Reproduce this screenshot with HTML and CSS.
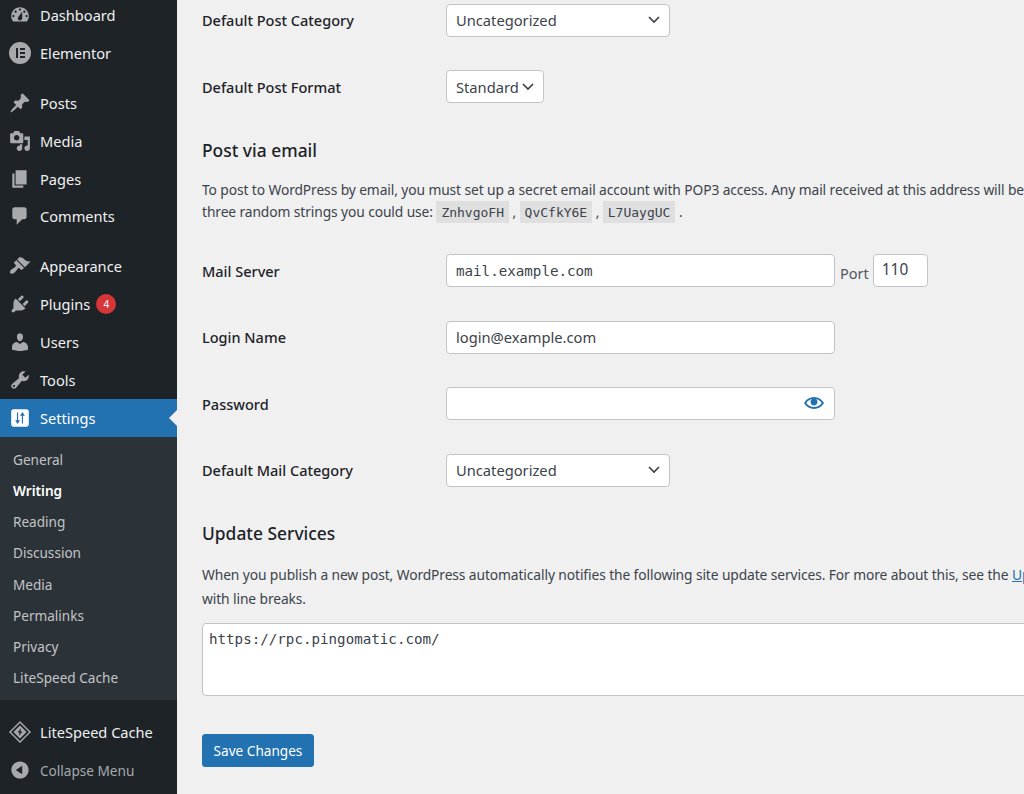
FILE: index.html
```html
<!DOCTYPE html>
<html lang="en">
<head>
    <meta charset="UTF-8">
    <meta name="viewport" content="width=device-width, initial-scale=1.0">
    <title>Writing Settings</title>
    <link rel="stylesheet" href="styles.css">
</head>
<body>
    <div class="admin">
        <nav class="sidebar">
            <ul class="menu">
                <li class="menu-item">
                    <svg class="icon" viewBox="0 0 20 20"><path fill-rule="evenodd" d="M3.76 16h12.48c1.1-1.37 1.76-3.11 1.76-5 0-4.42-3.58-8-8-8s-8 3.58-8 8c0 1.89.66 3.63 1.76 5zM10 4c.55 0 1 .45 1 1s-.45 1-1 1-1-.45-1-1 .45-1 1-1zM6 6c.55 0 1 .45 1 1s-.45 1-1 1-1-.45-1-1 .45-1 1-1zm8 0c.55 0 1 .45 1 1s-.45 1-1 1-1-.45-1-1 .45-1 1-1zm-5.37 5.55L12 7v6c0 1.1-.9 2-2 2s-2-.9-2-2c0-.57.24-1.08.63-1.45zM4 10c.55 0 1 .45 1 1s-.45 1-1 1-1-.45-1-1 .45-1 1-1zm12 0c.55 0 1 .45 1 1s-.45 1-1 1-1-.45-1-1 .45-1 1-1z"/></svg>
                    Dashboard
                </li>
                <li class="menu-item">
                    <svg class="icon" viewBox="0 0 22 22"><path fill-rule="evenodd" d="M11 0a11 11 0 1 0 0 22 11 11 0 0 0 0-22zM7 6h2v10H7zm4 0h5v2h-5zm0 4h5v2h-5zm0 4h5v2h-5z"/></svg>
                    Elementor
                </li>
                <li class="menu-item separated">
                    <svg class="icon" viewBox="0 0 20 20"><path d="M10.44 3.02l1.82-1.82 6.36 6.35-1.83 1.82c-1.05-.68-2.48-.57-3.41.36l-.75.75c-.92.93-1.04 2.35-.35 3.41l-1.83 1.82-2.41-2.41-2.8 2.79c-.42.42-3.38 2.71-3.8 2.29s1.86-3.39 2.28-3.81l2.79-2.79L4.1 9.36l1.83-1.82c1.05.69 2.48.57 3.4-.36l.75-.75c.93-.92 1.05-2.35.36-3.41z"/></svg>
                    Posts
                </li>
                <li class="menu-item">
                    <svg class="icon" viewBox="0 0 20 20"><path fill-rule="evenodd" d="M13 11V4c0-.55-.45-1-1-1h-1.67L9 1H5L3.67 3H2c-.55 0-1 .45-1 1v7c0 .55.45 1 1 1h10c.55 0 1-.45 1-1zM7 4.5c1.38 0 2.5 1.12 2.5 2.5S8.38 9.5 7 9.5 4.5 8.38 4.5 7 5.62 4.5 7 4.5zM14 6h5v10.5c0 1.38-1.12 2.5-2.5 2.5S14 17.88 14 16.5s1.12-2.5 2.5-2.5c.17 0 .34.02.5.05V9h-3V6zm-4 8.05V13h2v3.5c0 1.38-1.12 2.5-2.5 2.5S7 17.88 7 16.5 8.12 14 9.5 14c.17 0 .34.02.5.05z"/></svg>
                    Media
                </li>
                <li class="menu-item">
                    <svg class="icon" viewBox="0 0 20 20"><path d="M6 15V2h10v13H6zm-1 1h8v2H3V5h2v11z"/></svg>
                    Pages
                </li>
                <li class="menu-item">
                    <svg class="icon" viewBox="0 0 20 20"><path d="M5 2h9c1.1 0 2 .9 2 2v7c0 1.1-.9 2-2 2h-2l-5 5v-5H5c-1.1 0-2-.9-2-2V4c0-1.1.9-2 2-2z"/></svg>
                    Comments
                </li>
                <li class="menu-item separated">
                    <svg class="icon" viewBox="0 0 20 20"><path d="M14.48 11.06L7.41 3.99l1.5-1.5c.5-.56 2.3-.47 3.51.32 1.21.8 1.43 1.28 2.91 2.1 1.18.64 2.45 1.26 4.45.85zm-.71.71L6.7 4.7 4.93 6.47c-.39.39-.39 1.02 0 1.41l1.06 1.06c.39.39.39 1.03 0 1.42-.6.6-1.43 1.11-2.21 1.69-.35.26-.7.53-1.01.84C1.43 13.23.4 14.98 1.1 16.4s3.17.37 4.52-.99c.3-.3.58-.65.84-1 .58-.79 1.09-1.62 1.69-2.22.39-.39 1.02-.39 1.41 0l1.06 1.06c.39.39 1.02.39 1.41 0z"/></svg>
                    Appearance
                </li>
                <li class="menu-item">
                    <svg class="icon" viewBox="0 0 20 20"><path d="M13.11 4.36L9.87 7.6 8 5.73l3.24-3.24c.35-.34 1.05-.2 1.56.32.52.51.66 1.21.31 1.55zm-8 1.77l.91-1.12 9.01 9.01-1.19.84c-.71.71-2.63 1.16-3.82 1.16H6.14L4.9 17.26c-.59.59-1.54.59-2.12 0-.59-.58-.59-1.53 0-2.12l1.24-1.24v-3.88c0-1.13.4-3.19 1.09-3.89zm7.26 3.97l3.24-3.24c.34-.35 1.04-.21 1.55.31.52.51.66 1.21.31 1.55l-3.24 3.25z"/></svg>
                    Plugins
                    <span class="badge">4</span>
                </li>
                <li class="menu-item">
                    <svg class="icon" viewBox="0 0 20 20"><path d="M10 9.25c-2.27 0-2.73-3.44-2.73-3.44C7 4.02 7.82 2 9.97 2c2.16 0 2.98 2.02 2.71 3.81 0 0-.41 3.44-2.68 3.44zm0 2.57L12.72 10c2.39 0 4.52 2.33 4.52 4.53v2.49s-3.65 1.13-7.24 1.13c-3.65 0-7.24-1.13-7.24-1.13v-2.49c0-2.25 1.94-4.48 4.47-4.48z"/></svg>
                    Users
                </li>
                <li class="menu-item">
                    <svg class="icon" viewBox="0 0 20 20"><path fill-rule="evenodd" d="M16.68 9.77c-1.34 1.34-3.3 1.67-4.95.99l-5.41 6.52c-.99.99-2.59.99-3.58 0s-.99-2.59 0-3.57l6.52-5.42c-.68-1.65-.35-3.61.99-4.95 1.28-1.28 3.12-1.62 4.72-1.06l-2.89 2.89 2.82 2.82 2.86-2.87c.53 1.58.18 3.39-1.08 4.65zM3.81 16.21c.4.39 1.04.39 1.43 0 .4-.4.4-1.04 0-1.43-.39-.4-1.03-.4-1.43 0-.39.39-.39 1.03 0 1.43z"/></svg>
                    Tools
                </li>
                <li class="menu-item active">
                    <svg class="icon" viewBox="0 0 20 20"><path fill-rule="evenodd" d="M18 16V4c0-1.100-.9-2-2-2H4c-1.100 0-2 .9-2 2v12c0 1.100.9 2 2 2h12c1.100 0 2-.9 2-2zM7.300 5h1v7h1.700L7.800 15.500 5.600 12h1.700zM12.700 8h1.700l-2.200-3.500L10 8h1.700v7h1z"/></svg>
                    Settings
                </li>
            </ul>
            <ul class="submenu">
                <li>General</li>
                <li class="current">Writing</li>
                <li>Reading</li>
                <li>Discussion</li>
                <li>Media</li>
                <li>Permalinks</li>
                <li>Privacy</li>
                <li>LiteSpeed Cache</li>
            </ul>
            <ul class="menu menu-bottom">
                <li class="menu-item">
                    <svg class="icon" viewBox="0 0 22 22"><path fill-rule="evenodd" d="M11 0l11 11-11 11L0 11zm0 2L2 11l9 9 9-9zM11 4.500l6.500 6.500-6.500 6.500L4.500 11zm1 2.500L8.500 11.500H10.500l-.5 3.500 3.500-4.500H11.500z"/></svg>
                    LiteSpeed Cache
                </li>
                <li class="menu-item collapse">
                    <svg class="icon" viewBox="0 0 20 20"><path d="M10 2.160c4.330 0 7.840 3.510 7.840 7.840s-3.510 7.840-7.840 7.840S2.160 14.330 2.160 10 5.710 2.160 10 2.160zm2 11.720V6.120L6.180 9.970z"/></svg>
                    Collapse Menu
                </li>
            </ul>
        </nav>

        <main class="content">
            <form>
                <div class="form-table">
                    <label for="post-category">Default Post Category</label>
                    <select id="post-category" class="select-wide"><option>Uncategorized</option></select>
                    <label for="post-format">Default Post Format</label>
                    <select id="post-format" class="select-small"><option>Standard</option></select>
                </div>

                <h2>Post via email</h2>
                <p class="desc first-desc">To post to WordPress by email, you must set up a secret email account with POP3 access. Any mail received at this address will be</p>
                <p class="desc">three random strings you could use: <code>ZnhvgoFH</code> , <code>QvCfkY6E</code> , <code>L7UaygUC</code> .</p>

                <div class="form-table mail-table">
                    <label for="mail-server">Mail Server</label>
                    <div class="field-line">
                        <input id="mail-server" class="text-wide mono" type="text" value="mail.example.com">
                        <label class="port-label" for="mail-port">Port</label>
                        <input id="mail-port" class="text-port" type="text" value="110">
                    </div>
                    <label for="login-name">Login Name</label>
                    <input id="login-name" class="text-wide" type="text" value="login@example.com">
                    <label for="mail-pass">Password</label>
                    <div class="password-wrap">
                        <input id="mail-pass" class="text-wide" type="text">
                        <svg class="eye" viewBox="0 0 20 20"><path fill-rule="evenodd" d="M19.700 9.400C17.700 6 14 3.900 10 3.900S2.300 6 .3 9.400L0 10l.3.600c2 3.400 5.700 5.500 9.700 5.500s7.700-2.100 9.700-5.500l.3-.6-.3-.6zM10 14.100c-3.100 0-6-1.600-7.700-4.100C3.600 8 5.700 6.600 8 6.100c-.9.600-1.500 1.700-1.500 2.900 0 1.900 1.600 3.500 3.500 3.500s3.500-1.600 3.500-3.500c0-1.200-.6-2.300-1.500-2.900 2.300.5 4.400 1.900 5.700 3.900-1.700 2.500-4.600 4.100-7.700 4.100z"/></svg>
                    </div>
                    <label for="mail-category">Default Mail Category</label>
                    <select id="mail-category" class="select-wide"><option>Uncategorized</option></select>
                </div>

                <h2 class="services-title">Update Services</h2>
                <p class="desc services-desc">When you publish a new post, WordPress automatically notifies the following site update services. For more about this, see the <a href="#">Update Services</a></p>
                <p class="desc">with line breaks.</p>
                <textarea class="ping-sites" spellcheck="false">https://rpc.pingomatic.com/</textarea>

                <button class="save" type="button">Save Changes</button>
            </form>
        </main>
    </div>
</body>
</html>
```

FILE: styles.css
```css
html, body {
    margin: 0;
    height: 100%;
    overflow: hidden;
}
body {
    font-family: "Noto Sans", Arial, sans-serif;
    font-size: 14.5px;
    color: #3c434a;
    background-color: #f0f0f1;
}
ul {
    list-style: none;
    margin: 0;
    padding: 0;
}
.admin {
    display: grid;
    grid-template-columns: 177px 1fr;
    height: 794px;
}

/* sidebar */
.sidebar {
    background-color: #1d2327;
    color: #f0f0f1;
    font-size: 14.6px;
    overflow: hidden;
}
.menu {
    margin-top: -4px;
}
.menu-bottom {
    margin-top: 13px;
}
.menu-item {
    display: flex;
    align-items: center;
    height: 37.9px;
    padding-left: 9px;
    gap: 9px;
}
.menu-item.separated {
    margin-top: 12px;
}
.icon {
    width: 22px;
    height: 22px;
    fill: #a7aaad;
    flex-shrink: 0;
}
.badge {
    display: inline-flex;
    align-items: center;
    justify-content: center;
    width: 20px;
    height: 20px;
    margin-left: -3px;
    border-radius: 50%;
    background-color: #d63638;
    color: white;
    font-size: 10px;
}
.menu-item.active {
    position: relative;
    background-color: #2271b1;
    color: white;
}
.active .icon {
    fill: white;
}
.active::after {
    content: "";
    position: absolute;
    right: 0;
    top: 50%;
    margin-top: -8px;
    border: 8px solid transparent;
    border-right-color: #f0f0f1;
}
.collapse {
    color: #a7aaad;
    font-size: 13.6px;
}
.submenu {
    background-color: #2c3338;
    padding: 7px 0 7px;
    color: #c3c4c7;
    font-size: 13.6px;
}
.submenu li {
    height: 31.2px;
    line-height: 31.2px;
    padding-left: 13px;
}
.submenu .current {
    color: white;
    font-weight: 600;
}

/* content */
.content {
    padding-left: 25px;
    overflow: hidden;
}
.form-table {
    display: grid;
    grid-template-columns: 244px auto;
    justify-content: start;
    align-items: center;
    row-gap: 33.6px;
    padding-top: 3.5px;
}
.form-table > label {
    color: #1d2327;
    font-weight: 500;
}
select, input, textarea {
    box-sizing: border-box;
    height: 33px;
    border: 1px solid #c3c4c7;
    border-radius: 4px;
    background-color: white;
    color: #3c434a;
    font-family: inherit;
    font-size: 14.7px;
    margin: 0;
    outline: none;
}
select {
    appearance: none;
    padding: 0 24px 0 9px;
    background-image: url("data:image/svg+xml,%3Csvg xmlns='http://www.w3.org/2000/svg' width='20' height='20' viewBox='0 0 20 20'%3E%3Cpath d='M5 7l5 5 5-5' fill='none' stroke='%233c434a' stroke-width='1.700'/%3E%3C/svg%3E");
    background-repeat: no-repeat;
    background-position: right 5px center;
}
.select-wide {
    width: 224px;
}
.select-small {
    width: 98px;
}
input {
    padding: 0 9px;
}
.text-wide {
    width: 389px;
}
.text-port {
    width: 55px;
    margin-left: -1px;
    padding-left: 8px;
    padding-bottom: 2px;
    font-size: 15.4px;
}
.mono {
    font-family: "DejaVu Sans Mono", monospace;
    font-size: 14.2px;
}
.field-line {
    display: flex;
    align-items: center;
    gap: 5px;
}
.port-label {
    color: #50575e;
    padding-top: 4px;
}
.password-wrap {
    position: relative;
    width: 389px;
}
.password-wrap input {
    display: block;
}
.eye {
    position: absolute;
    right: 11px;
    top: 6px;
    width: 20px;
    height: 20px;
    fill: #2271b1;
}
h2 {
    margin: 33px 0 0;
    color: #1d2327;
    font-size: 17.4px;
    font-weight: 500;
    line-height: 28px;
}
.desc {
    margin: 0;
    font-size: 13.8px;
    letter-spacing: -0.1px;
    line-height: 22px;
    height: 22px;
    white-space: nowrap;
}
.first-desc {
    margin-top: 15px;
}
code {
    padding: 4px 5px 3px;
    background-color: rgba(0, 0, 0, 0.07);
    color: #3c434a;
    font-family: "DejaVu Sans Mono", monospace;
    font-size: 13px;
    letter-spacing: 0;
}
.mail-table {
    padding-top: 0;
    margin-top: 31px;
}
.services-title {
    margin-top: 32px;
}
.services-desc {
    margin-top: 17px;
    margin-bottom: 2px;
}
a {
    color: #2271b1;
}
.ping-sites {
    display: block;
    width: 900px;
    height: 73px;
    margin-top: 13px;
    padding: 7px 6px;
    font-family: "DejaVu Sans Mono", monospace;
    font-size: 14.2px;
    resize: none;
}
.save {
    display: block;
    margin-top: 38px;
    width: 112px;
    height: 33px;
    border: 1px solid #2271b1;
    border-radius: 3px;
    background-color: #2271b1;
    color: white;
    font-family: inherit;
    font-size: 13.6px;
}
```
